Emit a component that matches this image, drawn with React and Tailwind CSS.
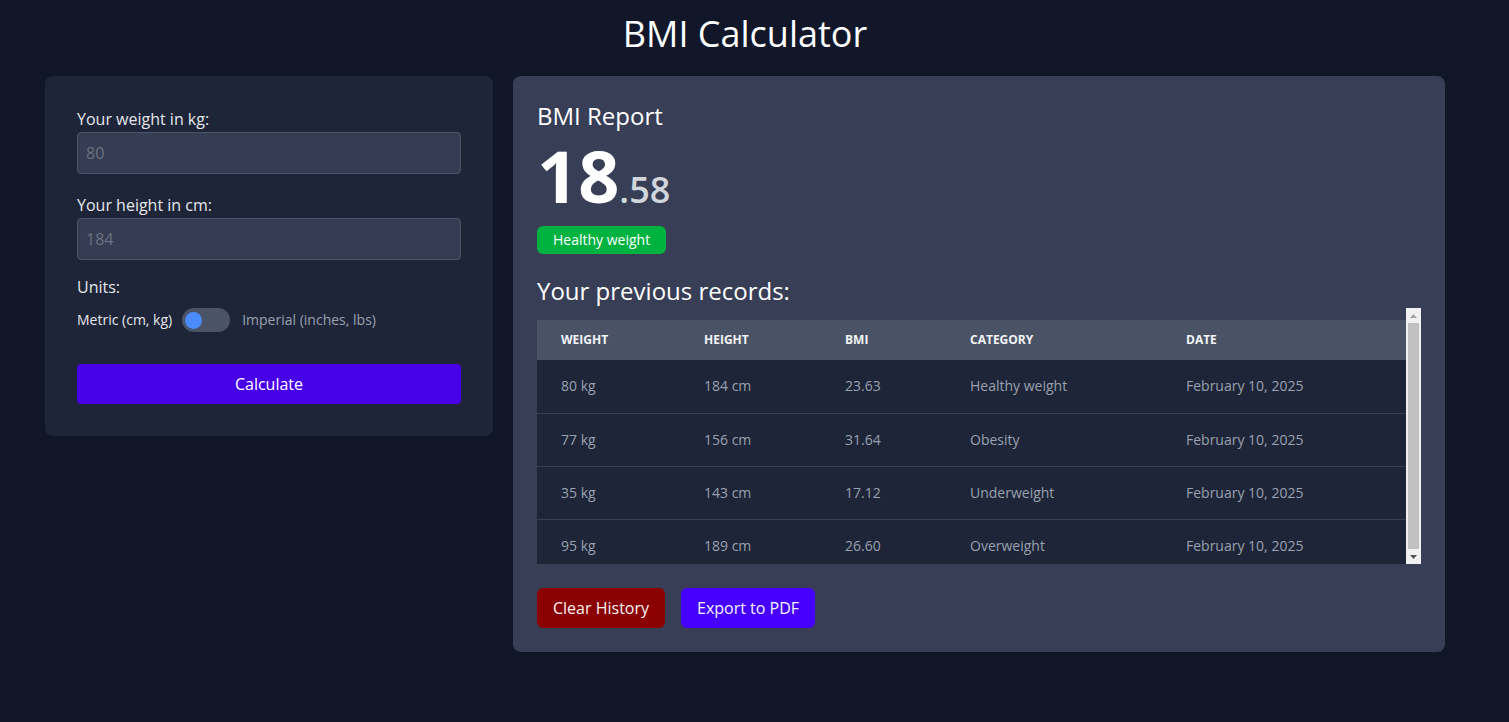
import React from "react";

const rows = [
  { w: "80 kg", h: "184 cm", bmi: "23.63", cat: "Healthy weight", date: "February 10, 2025" },
  { w: "77 kg", h: "156 cm", bmi: "31.64", cat: "Obesity", date: "February 10, 2025" },
  { w: "35 kg", h: "143 cm", bmi: "17.12", cat: "Underweight", date: "February 10, 2025" },
  { w: "95 kg", h: "189 cm", bmi: "26.60", cat: "Overweight", date: "February 10, 2025" },
];

export default function App() {
  return (
    <div
      className="min-h-[722px] w-full bg-[#111729] text-white"
      style={{ fontFamily: "'Open Sans', 'Noto Sans', sans-serif" }}
    >
      <div className="ml-[45px] w-[1400px] pt-[12px]">
        <h1 className="text-center text-[36px] leading-[44px] font-medium text-white">BMI Calculator</h1>
        <div className="mt-[20px] flex items-start gap-5">
          {/* Left card */}
          <div className="w-[448px] rounded-lg bg-[#1e2538] px-8 pt-[31px] pb-8">
            <label className="block text-base leading-6 text-gray-200">Your weight in kg:</label>
            <input
              className="mt-[1px] block h-[42px] w-full rounded border border-[#4b5366] bg-[#363c53] px-2 text-base text-gray-300 placeholder-gray-500 outline-none"
              placeholder="80"
            />
            <label className="mt-[19px] block text-base leading-6 text-gray-200">Your height in cm:</label>
            <input
              className="mt-[1px] block h-[42px] w-full rounded border border-[#4b5366] bg-[#363c53] px-2 text-base text-gray-300 placeholder-gray-500 outline-none"
              placeholder="184"
            />
            <div className="mt-[15px] text-base leading-6 text-gray-200">Units:</div>
            <div className="mt-[9px] flex items-center">
              <span className="text-sm text-gray-200">Metric (cm, kg)</span>
              <div className="ml-[10px] flex h-6 w-12 items-center rounded-full bg-[#4b5366] px-[3px]">
                <div className="h-[17px] w-[17px] rounded-full bg-[#4a8cff]" />
              </div>
              <span className="ml-3 text-sm text-gray-400">Imperial (inches, lbs)</span>
            </div>
            <button className="mt-8 h-10 w-full rounded bg-[#4800e8] text-base text-white">Calculate</button>
          </div>

          {/* Right card */}
          <div className="w-[932px] rounded-lg bg-[#373e56] p-6">
            <h2 className="text-2xl leading-8 font-medium text-white">BMI Report</h2>
            <div className="mt-[7px] flex h-[72px] items-baseline leading-[72px]">
              <span className="text-[72px] font-bold leading-[72px] text-white">18</span>
              <span className="text-[36px] font-semibold leading-[72px] text-gray-300">.58</span>
            </div>
            <div className="mt-[15px] inline-block rounded-md bg-[#00b341] px-4 py-[4px] text-sm text-white">Healthy weight</div>
            <h3 className="mt-[21px] text-2xl leading-8 font-medium text-white">Your previous records:</h3>
            <div className="mt-[1px] flex h-[256px]">
              <div className="h-full flex-1 overflow-hidden">
                <table className="mt-3 w-full border-collapse text-left">
                  <thead>
                    <tr className="h-10 bg-[#4a5366] text-xs font-bold uppercase text-gray-100">
                      <th className="w-[143px] pl-6 font-bold">Weight</th>
                      <th className="w-[141px] pl-6 font-bold">Height</th>
                      <th className="w-[125px] pl-6 font-bold">BMI</th>
                      <th className="w-[216px] pl-6 font-bold">Category</th>
                      <th className="pl-6 font-bold">Date</th>
                    </tr>
                  </thead>
                  <tbody>
                    {rows.map((r, i) => (
                      <tr key={i} className="h-[53px] border-b border-[#373e56] bg-[#1e2538] text-sm text-gray-400">
                        <td className="pl-6">{r.w}</td>
                        <td className="pl-6">{r.h}</td>
                        <td className="pl-6">{r.bmi}</td>
                        <td className="pl-6">{r.cat}</td>
                        <td className="pl-6">{r.date}</td>
                      </tr>
                    ))}
                  </tbody>
                </table>
              </div>
              {/* scrollbar */}
              <div className="flex h-full w-[15px] flex-col bg-[#f1f1f1]">
                <div className="flex h-[15px] items-center justify-center">
                  <svg width="7" height="4" viewBox="0 0 7 4"><path d="M3.5 0 L7 4 L0 4 Z" fill="#a3a3a3" /></svg>
                </div>
                <div className="mx-[2px] flex-1 bg-[#c1c1c1]" />
                <div className="flex h-[15px] items-center justify-center">
                  <svg width="7" height="4" viewBox="0 0 7 4"><path d="M0 0 L7 0 L3.5 4 Z" fill="#505050" /></svg>
                </div>
              </div>
            </div>
            <div className="mt-6 flex gap-4">
              <button className="h-10 rounded-md bg-[#8b0000] px-4 text-base text-gray-100">Clear History</button>
              <button className="h-10 rounded-md bg-[#4600ff] px-4 text-base text-gray-100">Export to PDF</button>
            </div>
          </div>
        </div>
      </div>
    </div>
  );
}
